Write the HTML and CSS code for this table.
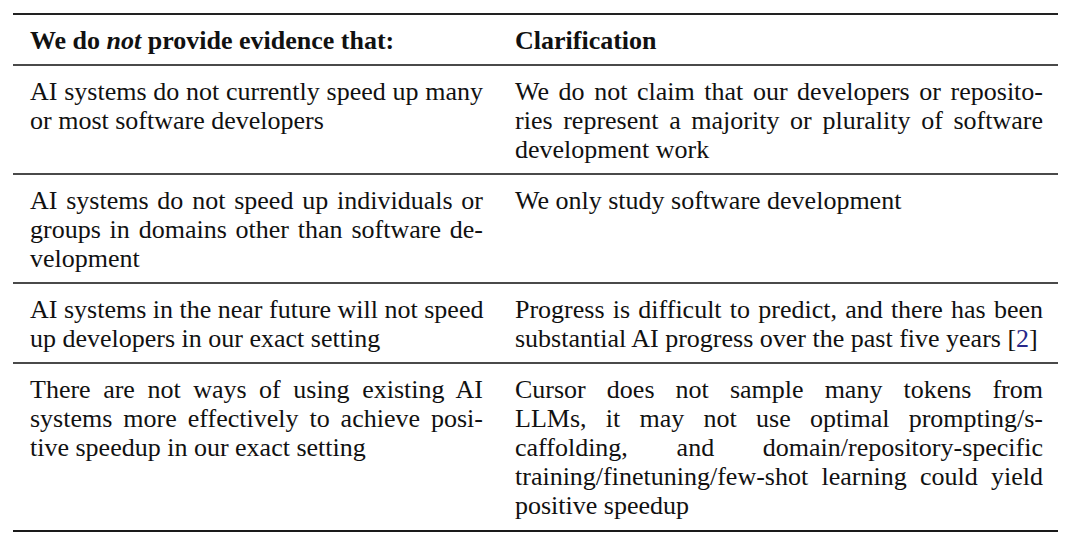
FILE: index.html
```html
<!DOCTYPE html>
<html lang="en">
<head>
<meta charset="utf-8">
<title>Evidence table</title>
<link rel="stylesheet" href="styles.css">
</head>
<body>
<table class="claims">
  <colgroup>
    <col class="col-left">
    <col class="col-right">
  </colgroup>
  <thead>
    <tr class="head-row">
      <th>We do <em>not</em> provide evidence that:</th>
      <th>Clarification</th>
    </tr>
  </thead>
  <tbody>
    <tr>
      <td>
        <span class="ln">AI systems do not currently speed up many</span>
        <span class="ln last">or most software developers</span>
      </td>
      <td>
        <span class="ln">We do not claim that our developers or reposito-</span>
        <span class="ln">ries represent a majority or plurality of software</span>
        <span class="ln last">development work</span>
      </td>
    </tr>
    <tr>
      <td>
        <span class="ln">AI systems do not speed up individuals or</span>
        <span class="ln">groups in domains other than software de-</span>
        <span class="ln last">velopment</span>
      </td>
      <td>
        <span class="ln last">We only study software development</span>
      </td>
    </tr>
    <tr>
      <td>
        <span class="ln">AI systems in the near future will not speed</span>
        <span class="ln last">up developers in our exact setting</span>
      </td>
      <td>
        <span class="ln">Progress is difficult to predict, and there has been</span>
        <span class="ln last">substantial AI progress over the past five years [<span class="cite">2</span>]</span>
      </td>
    </tr>
    <tr class="last-row">
      <td>
        <span class="ln">There are not ways of using existing AI</span>
        <span class="ln">systems more effectively to achieve posi-</span>
        <span class="ln last">tive speedup in our exact setting</span>
      </td>
      <td>
        <span class="ln">Cursor does not sample many tokens from</span>
        <span class="ln">LLMs, it may not use optimal prompting/s-</span>
        <span class="ln">caffolding, and domain/repository-specific</span>
        <span class="ln">training/finetuning/few-shot learning could yield</span>
        <span class="ln last">positive speedup</span>
      </td>
    </tr>
  </tbody>
</table>
</body>
</html>
```

FILE: styles.css
```css
html, body {
  margin: 0;
  padding: 0;
  background: #ffffff;
}

body {
  font-family: "Liberation Serif", "Times New Roman", serif;
  color: #111111;
  font-size: 26px;
  line-height: 29px;
}

.claims {
  margin: 13px 0 0 13px;
  width: 1045px;
  table-layout: fixed;
  border-collapse: collapse;
  border-top: 2px solid #222;
  border-bottom: 2px solid #1a1a1a;
}

.col-left { width: 486px; }
.col-right { width: 559px; }

.claims th,
.claims td {
  padding: 11px 16px 9px 17px;
  vertical-align: top;
  text-align: left;
}

.claims th:last-child,
.claims td:last-child {
  padding-left: 16px;
  padding-right: 15px;
}

.claims tr.last-row td {
  padding-bottom: 10px;
}

.claims th {
  font-weight: bold;
}

.claims th em {
  font-style: italic;
}

.claims tr {
  border-bottom: 2px solid #4a4a4a;
}

.claims tr.last-row {
  border-bottom: 2px solid #1a1a1a;
}

.ln {
  display: block;
  white-space: nowrap;
  text-align: justify;
  text-align-last: justify;
}

.ln.last {
  text-align-last: left;
}

.cite {
  color: #27288a;
}
```
